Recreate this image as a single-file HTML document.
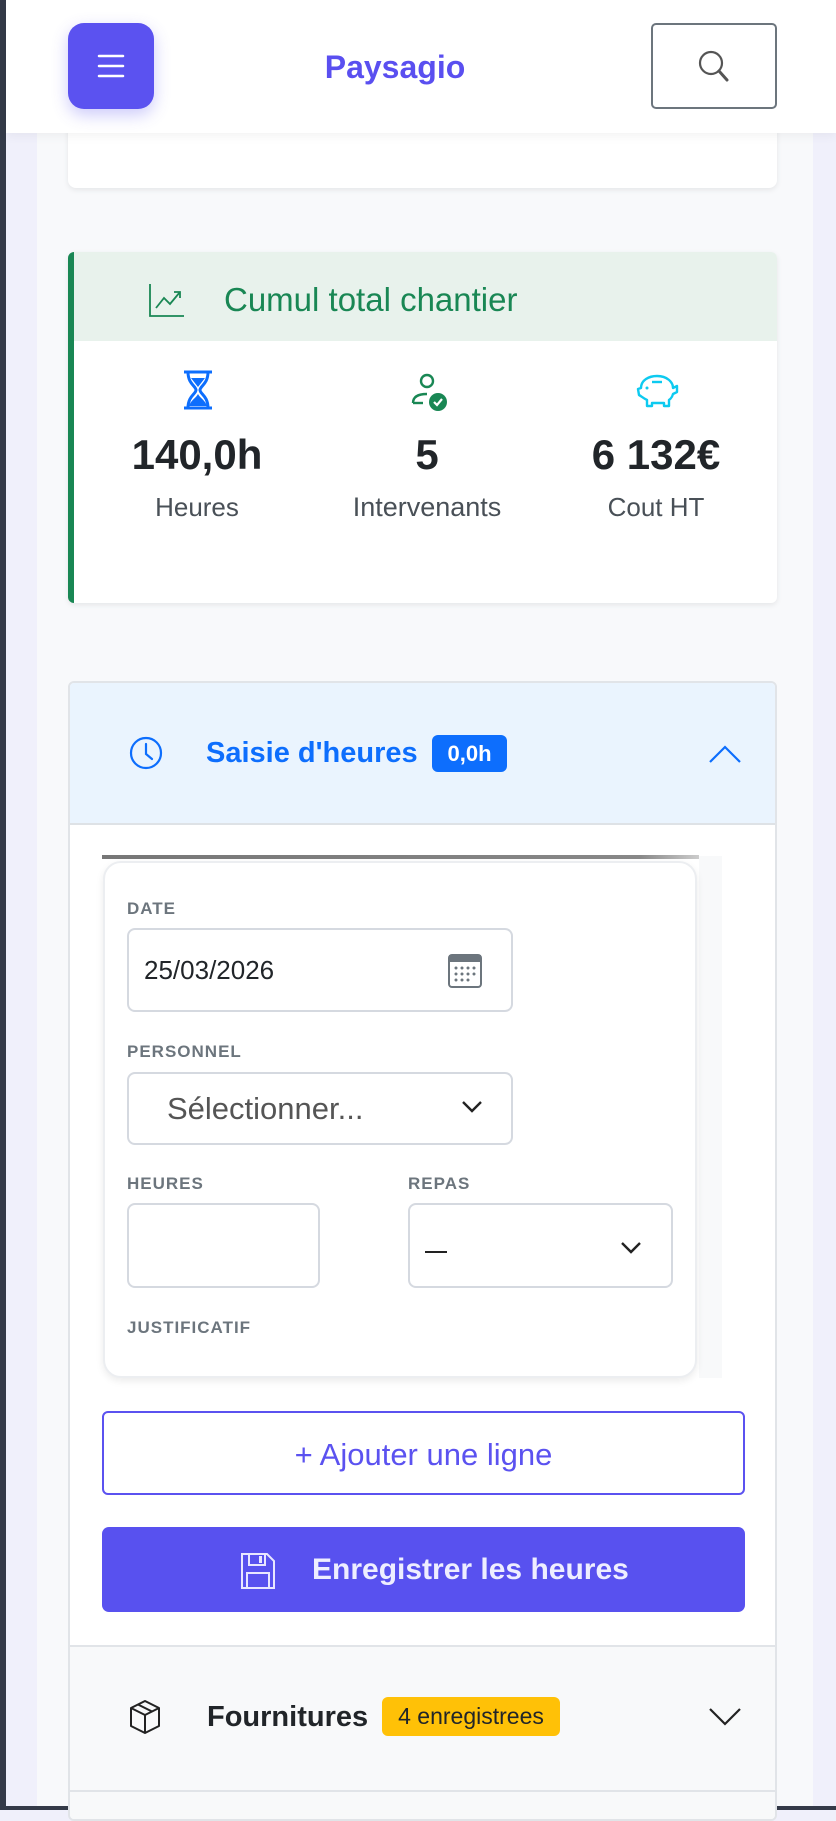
<!DOCTYPE html>
<html><head><meta charset="utf-8"><style>
*{box-sizing:border-box;margin:0;padding:0}
body{width:836px;height:1810px;overflow:hidden;background:#f0f0fb;font-family:"Liberation Sans",sans-serif;position:relative}
.abs{position:absolute}
.lbl{position:absolute;font-size:17px;font-weight:bold;color:#6c757d;letter-spacing:1px}
.inp{position:absolute;border:2px solid #d5d9e0;border-radius:8px;background:#fff}
</style></head><body>
<div class="abs" style="left:0;top:0;width:6px;height:1810px;background:#343a48"></div>
<div class="abs" style="left:37px;top:0;width:776px;height:1810px;background:#f8f9fb"></div>
<div class="abs" style="left:0;top:1806px;width:836px;height:4px;background:#343a48"></div>
<div class="abs" style="left:68px;top:100px;width:709px;height:88px;background:#fff;border-radius:8px;box-shadow:0 2px 6px rgba(0,0,0,.08)"></div>
<div class="abs" style="left:6px;top:0;width:830px;height:133px;background:#fff;box-shadow:0 3px 10px rgba(0,0,0,.05)"></div>
<div class="abs" style="left:68px;top:23px;width:86px;height:86px;background:#5b52f0;border-radius:16px;box-shadow:0 6px 16px rgba(91,82,240,.3)">
<svg width="86" height="86"><g stroke="#fff" stroke-width="2.5" stroke-linecap="round"><line x1="31" y1="33" x2="55" y2="33"/><line x1="31" y1="43" x2="55" y2="43"/><line x1="31" y1="53" x2="55" y2="53"/></g></svg></div>
<div class="abs" style="left:275px;top:49px;width:240px;text-align:center;font-size:32px;font-weight:bold;color:#5a4ff0">Paysagio</div>
<div class="abs" style="left:651px;top:23px;width:126px;height:86px;border:2px solid #6c757d;border-radius:5px;background:#fff">
<svg width="122" height="82"><circle cx="58" cy="38" r="11" fill="none" stroke="#555" stroke-width="2.2"/><line x1="66" y1="46" x2="74" y2="55" stroke="#555" stroke-width="3" stroke-linecap="round"/></svg></div>
<div class="abs" style="left:68px;top:252px;width:709px;height:351px;background:#fff;border-radius:6px;border-left:6px solid #198754;box-shadow:0 2px 6px rgba(0,0,0,.08);overflow:hidden">
<div style="height:89px;background:#e8f2ec;position:relative">
<svg class="abs" style="left:74px;top:30px" width="38" height="36"><g fill="none" stroke="#198754" stroke-width="1.8"><path d="M2 2V34H36"/><path d="M8 26L16 16L22 22L32 10"/><path d="M26 10H32V16"/></g></svg>
<div class="abs" style="left:150px;top:29px;font-size:33px;color:#198754">Cumul total chantier</div></div>
</div>
<svg class="abs" style="left:182px;top:370px" width="32" height="40"><path d="M2 2H30M2 38H30M6 2C6 14 14 16 14 20C14 24 6 26 6 38H26C26 26 18 24 18 20C18 16 26 14 26 2" fill="none" stroke="#0d6efd" stroke-width="3"/><path d="M9 8H23L16 17ZM7 36C9 30 14 28 16 24C18 28 23 30 25 36Z" fill="#0d6efd"/></svg>
<svg class="abs" style="left:409px;top:372px" width="40" height="40"><circle cx="18" cy="9" r="6" fill="none" stroke="#198754" stroke-width="2.4"/><path d="M4 31C4 24 10 22 18 22" fill="none" stroke="#198754" stroke-width="2.4"/><path d="M4 31H14" stroke="#198754" stroke-width="2.4"/><circle cx="29" cy="30" r="9" fill="#198754"/><path d="M25 30L28 33L33 27" fill="none" stroke="#fff" stroke-width="2.2"/></svg>
<svg class="abs" style="left:635px;top:372px" width="44" height="36"><path d="M6 16C6 8 14 4 22 4C32 4 38 10 38 16L42 14V20L38 22C37 26 34 28 34 28V34H29V31H17V34H12V28C8 26 6 24 4 23L3 17Z" fill="none" stroke="#0dcaf0" stroke-width="2.4" stroke-linejoin="round"/><path d="M17 10H27" stroke="#0dcaf0" stroke-width="2.4"/><circle cx="12" cy="16" r="1.5" fill="#0dcaf0"/></svg>
<div class="abs" style="left:97px;top:431px;width:200px;text-align:center;font-size:42px;font-weight:bold;color:#212529">140,0h</div>
<div class="abs" style="left:327px;top:431px;width:200px;text-align:center;font-size:42px;font-weight:bold;color:#212529">5</div>
<div class="abs" style="left:556px;top:431px;width:200px;text-align:center;font-size:42px;font-weight:bold;color:#212529">6 132€</div>
<div class="abs" style="left:97px;top:492px;width:200px;text-align:center;font-size:26px;color:#495057">Heures</div>
<div class="abs" style="left:307px;top:492px;width:240px;text-align:center;font-size:27px;color:#495057">Intervenants</div>
<div class="abs" style="left:556px;top:492px;width:200px;text-align:center;font-size:26px;color:#495057">Cout HT</div>
<div class="abs" style="left:68px;top:681px;width:709px;height:1140px;background:#fff;border:2px solid #e1e4e8;border-radius:6px;overflow:hidden">
<div style="height:142px;background:#eaf4fe;border-bottom:2px solid #dee2e6"></div>
<div class="abs" style="left:0;top:962px;width:709px;height:180px;background:#f8f9fa;border-top:2px solid #e1e4e8"></div>
<div class="abs" style="left:0;top:1107px;width:709px;height:2px;background:#e1e4e8"></div>
</div>
<svg class="abs" style="left:128px;top:735px" width="36" height="36"><circle cx="18" cy="18" r="15" fill="none" stroke="#0d6efd" stroke-width="2.2"/><path d="M18 9V19L24 24" fill="none" stroke="#0d6efd" stroke-width="2.2" stroke-linecap="round"/></svg>
<div class="abs" style="left:206px;top:737px;font-size:29px;font-weight:bold;color:#0d6efd">Saisie d'heures</div>
<div class="abs" style="left:432px;top:735px;width:75px;height:37px;background:#0d6efd;border-radius:6px;color:#fff;font-weight:bold;font-size:22px;text-align:center;line-height:37px">0,0h</div>
<svg class="abs" style="left:707px;top:742px" width="36" height="24"><path d="M3 20L18 5L33 20" fill="none" stroke="#0d6efd" stroke-width="2.2"/></svg>
<div class="abs" style="left:699px;top:856px;width:23px;height:522px;background:#f8f9fa"></div>
<div class="abs" style="left:102px;top:855px;width:597px;height:4px;background:linear-gradient(90deg,#777,#888 90%,#ccc)"></div>
<div class="abs" style="left:103px;top:861px;width:594px;height:517px;background:#fff;border:2px solid #eceef1;border-radius:18px;box-shadow:0 3px 8px rgba(0,0,0,.08)"></div>
<div class="lbl" style="left:127px;top:899px">DATE</div>
<div class="inp" style="left:127px;top:928px;width:386px;height:84px"></div>
<div class="abs" style="left:144px;top:955px;font-size:26px;color:#212529">25/03/2026</div>
<svg class="abs" style="left:447px;top:953px" width="36" height="36"><rect x="2" y="2" width="32" height="32" rx="3" fill="#fff" stroke="#6c757d" stroke-width="2"/><rect x="2" y="2" width="32" height="7" fill="#6c757d"/><g fill="#6c757d"><circle cx="9" cy="15" r="1.5"/><circle cx="15" cy="15" r="1.5"/><circle cx="21" cy="15" r="1.5"/><circle cx="27" cy="15" r="1.5"/><circle cx="9" cy="21" r="1.5"/><circle cx="15" cy="21" r="1.5"/><circle cx="21" cy="21" r="1.5"/><circle cx="27" cy="21" r="1.5"/><circle cx="9" cy="27" r="1.5"/><circle cx="15" cy="27" r="1.5"/><circle cx="21" cy="27" r="1.5"/></g></svg>
<div class="lbl" style="left:127px;top:1042px">PERSONNEL</div>
<div class="inp" style="left:127px;top:1072px;width:386px;height:73px"></div>
<div class="abs" style="left:167px;top:1091px;font-size:31px;color:#555">Sélectionner...</div>
<svg class="abs" style="left:460px;top:1099px" width="24" height="16"><path d="M3 3L12 12L21 3" fill="none" stroke="#222" stroke-width="2.4"/></svg>
<div class="lbl" style="left:127px;top:1174px">HEURES</div>
<div class="lbl" style="left:408px;top:1174px">REPAS</div>
<div class="inp" style="left:127px;top:1203px;width:193px;height:85px"></div>
<div class="inp" style="left:408px;top:1203px;width:265px;height:85px"></div>
<div class="abs" style="left:425px;top:1251px;width:22px;height:2px;background:#222"></div>
<svg class="abs" style="left:619px;top:1240px" width="24" height="16"><path d="M3 3L12 12L21 3" fill="none" stroke="#222" stroke-width="2.4"/></svg>
<div class="lbl" style="left:127px;top:1318px">JUSTIFICATIF</div>
<div class="abs" style="left:102px;top:1411px;width:643px;height:84px;border:2px solid #5b52f0;border-radius:6px;background:#fff;text-align:center;line-height:84px;font-size:31px;color:#5b52f0">+ Ajouter une ligne</div>
<div class="abs" style="left:102px;top:1527px;width:643px;height:85px;background:#5851ef;border-radius:7px"></div>
<svg class="abs" style="left:240px;top:1552px" width="36" height="38"><path d="M2 2H27L34 9V36H2Z" fill="none" stroke="#e8e6ff" stroke-width="2"/><rect x="9" y="2" width="16" height="11" fill="none" stroke="#e8e6ff" stroke-width="2"/><rect x="19" y="4" width="3" height="7" fill="#e8e6ff"/><rect x="7" y="21" width="22" height="15" fill="none" stroke="#e8e6ff" stroke-width="2"/></svg>
<div class="abs" style="left:312px;top:1553px;font-size:30px;font-weight:bold;color:#eeeeff">Enregistrer les heures</div>
<svg class="abs" style="left:128px;top:1699px" width="34" height="36"><path d="M17 2L31 9V27L17 34L3 27V9Z M3 9L17 16L31 9 M17 16V34 M10 5.5L24 12.5" fill="none" stroke="#222" stroke-width="2" stroke-linejoin="round"/></svg>
<div class="abs" style="left:207px;top:1701px;font-size:29px;font-weight:bold;color:#212529">Fournitures</div>
<div class="abs" style="left:382px;top:1697px;width:178px;height:39px;background:#ffc107;border-radius:6px;text-align:center;line-height:39px;font-size:23px;color:#212529">4 enregistrees</div>
<svg class="abs" style="left:707px;top:1705px" width="36" height="24"><path d="M3 4L18 19L33 4" fill="none" stroke="#222" stroke-width="2.2"/></svg>
</body></html>
